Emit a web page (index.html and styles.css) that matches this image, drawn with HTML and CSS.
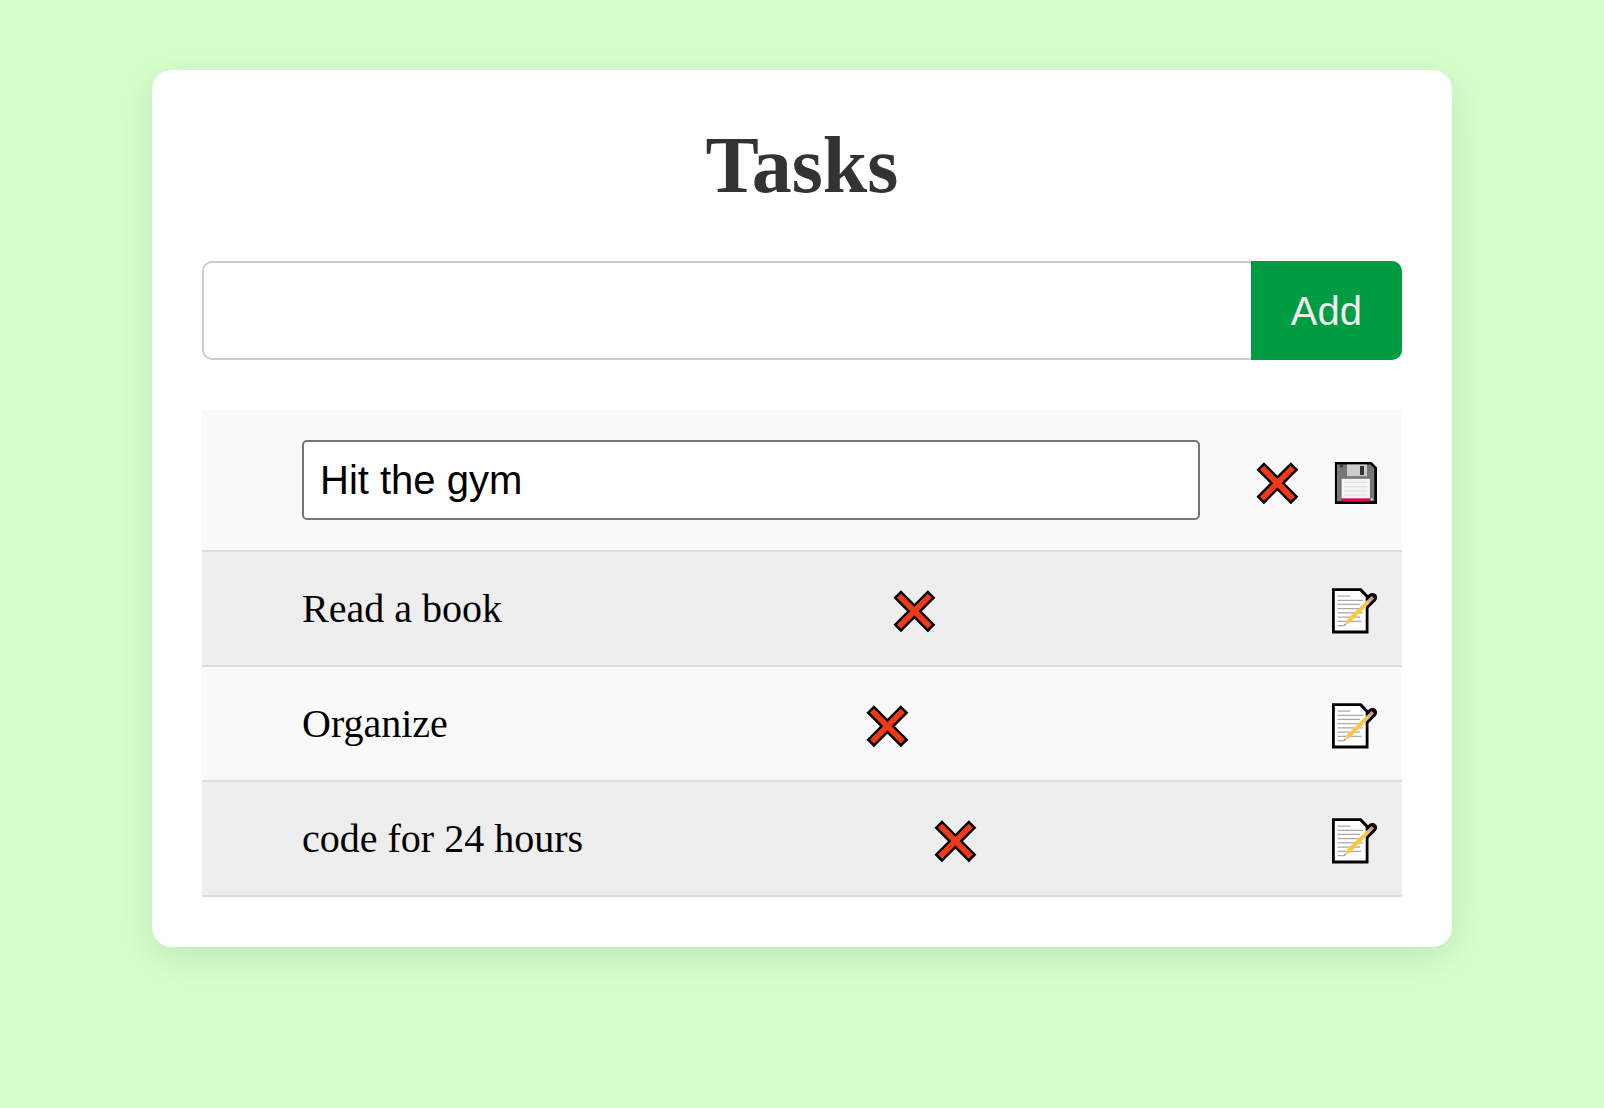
FILE: index.html
```html
<!DOCTYPE html>
<html lang="en">
<head>
<meta charset="utf-8">
<meta name="viewport" content="width=device-width, initial-scale=1">
<title>Tasks</title>
<link rel="stylesheet" href="styles.css">
</head>
<body>
<svg class="sprite" aria-hidden="true">
  <symbol id="cross" viewBox="0 0 55 53">
    <path d="M10.2 12 44.6 46.4M44.6 12 10.2 46.4" stroke="#000" stroke-width="10.6"/>
    <path d="M12 13.8 42.8 44.6M42.8 13.8 12 44.6" stroke="#f03a17" stroke-width="5.8"/>
  </symbol>
  <symbol id="save" viewBox="0 0 55 53">
    <path d="M7.9 8H44.5L50 13.5V50H7.9z" fill="#000"/>
    <path d="M10.4 10.5H43.4L47.3 14.4V47.3H10.4z" fill="#767676"/>
    <path d="M10.4 10.5h.8v36.8H10.4z" fill="#999"/>
    <path d="M13 10.5h2.8v2.8H13z" fill="#333"/>
    <path d="M20 10.5h20v11.7H20z" fill="#ccc"/>
    <path d="M33 12h4v9h-4z" fill="#333"/>
    <path d="M14.6 24.8H43v20H14.6z" fill="#f4f4f4"/>
    <path d="M17.3 28.5h23M17.3 32.7h23M17.3 36.9h23M17.3 41h23" stroke="#e0e0e0" stroke-width="1.2"/>
    <path d="M14.6 44.4H43v2.9H14.6z" fill="#e3005f"/>
    <path d="M44 44.2h2v2h-2z" fill="#ccc"/>
  </symbol>
  <symbol id="edit" viewBox="0 0 55 53">
    <path d="M5 6.3H34.3L41.5 13.7V51.4H5z" fill="#000"/>
    <path d="M38 23 45.4 15.6" stroke="#000" stroke-width="9.4" stroke-linecap="round"/>
    <path d="M7.8 9H33V15H38.7V48.5H7.8z" fill="#fff"/>
    <path d="M33 9.2 38.7 15H33z" fill="#eee"/>
    <path d="M10.5 14.1H23.3M10.5 18.4H36M10.5 22.4H33M10.5 26.7H36M10.5 30.9H36M10.5 35.2H33M10.5 39.4H34.5M10.5 43.7H17" stroke="#aaa" stroke-width="1.2"/>
    <path d="M17 43.8 19 38.7 21.8 41.6z" fill="#f3cfc0"/>
    <path d="M17 43.8 17.7 41.9 18.9 43.1z" fill="#444"/>
    <path d="M20.3 40.2 41.4 19.6" stroke="#ffc73a" stroke-width="4"/>
    <path d="M41 20 43.8 17.2" stroke="#bbb" stroke-width="3.6"/>
    <path d="M43.8 17.2 45.8 15.2" stroke="#f5938a" stroke-width="3.6"/>
  </symbol>
</svg>
<main class="card">
  <h1 class="title">Tasks</h1>
  <form class="add-form">
    <input class="add-input" type="text" aria-label="New task">
    <button class="add-button" type="button">Add</button>
  </form>
  <ul class="tasks">
    <li class="task">
      <input class="edit-input" type="text" value="Hit the gym" aria-label="Edit task">
      <button class="icon-button" type="button" aria-label="Delete"><svg class="icon"><use href="#cross"/></svg></button>
      <button class="icon-button" type="button" aria-label="Save"><svg class="icon"><use href="#save"/></svg></button>
    </li>
    <li class="task">
      <span>Read a book</span>
      <button class="icon-button" type="button" aria-label="Delete"><svg class="icon"><use href="#cross"/></svg></button>
      <button class="icon-button" type="button" aria-label="Edit"><svg class="icon"><use href="#edit"/></svg></button>
    </li>
    <li class="task">
      <span>Organize</span>
      <button class="icon-button" type="button" aria-label="Delete"><svg class="icon"><use href="#cross"/></svg></button>
      <button class="icon-button" type="button" aria-label="Edit"><svg class="icon"><use href="#edit"/></svg></button>
    </li>
    <li class="task">
      <span>code for 24 hours</span>
      <button class="icon-button" type="button" aria-label="Delete"><svg class="icon"><use href="#cross"/></svg></button>
      <button class="icon-button" type="button" aria-label="Edit"><svg class="icon"><use href="#edit"/></svg></button>
    </li>
  </ul>
</main>
</body>
</html>
```
FILE: styles.css
```css
* {
  box-sizing: border-box;
}

body {
  margin: 0;
  padding: 70px 20px;
  background: #d6ffcc;
  color: #000;
  font-family: "Liberation Serif", "Times New Roman", serif;
  font-size: 40px;
  line-height: 48px;
}

.sprite {
  display: none;
}

.card {
  max-width: 1300px;
  margin: 0 auto;
  padding: 50px;
  background: #fff;
  border-radius: 20px;
  box-shadow: 0 10px 40px rgba(0, 0, 0, 0.1);
}

.title {
  margin: 0 0 50px;
  color: #333;
  font-size: 80px;
  line-height: 91px;
  text-align: center;
}

.add-form {
  display: flex;
  margin-bottom: 50px;
}

.add-input,
.add-button,
.edit-input {
  font-family: "Liberation Sans", Arial, sans-serif;
  font-size: 40px;
  line-height: 46px;
}

.add-input {
  flex: 1;
  min-width: 0;
  padding: 20px;
  border: 2px solid #ccc;
  border-right: 0;
  border-radius: 10px 0 0 10px;
  background: #fff;
}

.add-button {
  height: 99px;
  padding: 0 40px;
  border: 0;
  border-radius: 0 10px 10px 0;
  background: #009c41;
  color: #eee;
}

.tasks {
  margin: 0;
  padding: 0;
  list-style: none;
}

.task {
  display: flex;
  align-items: center;
  justify-content: space-between;
  gap: 22px;
  padding: 30px 20px 30px 100px;
  border-bottom: 2px solid #ddd;
  background: #f9f9f9;
}

.task:nth-child(even) {
  background: #eee;
}

.edit-input {
  flex: 1;
  min-width: 0;
  height: 80px;
  margin-right: 28px;
  padding: 0 16px;
  border: 2px solid #767676;
  border-radius: 5px;
  background: #fff;
  color: #000;
}

.icon-button {
  flex: none;
  padding: 0;
  border: 0;
  background: none;
  cursor: pointer;
}

.icon {
  display: block;
  width: 55px;
  height: 53px;
}
```
